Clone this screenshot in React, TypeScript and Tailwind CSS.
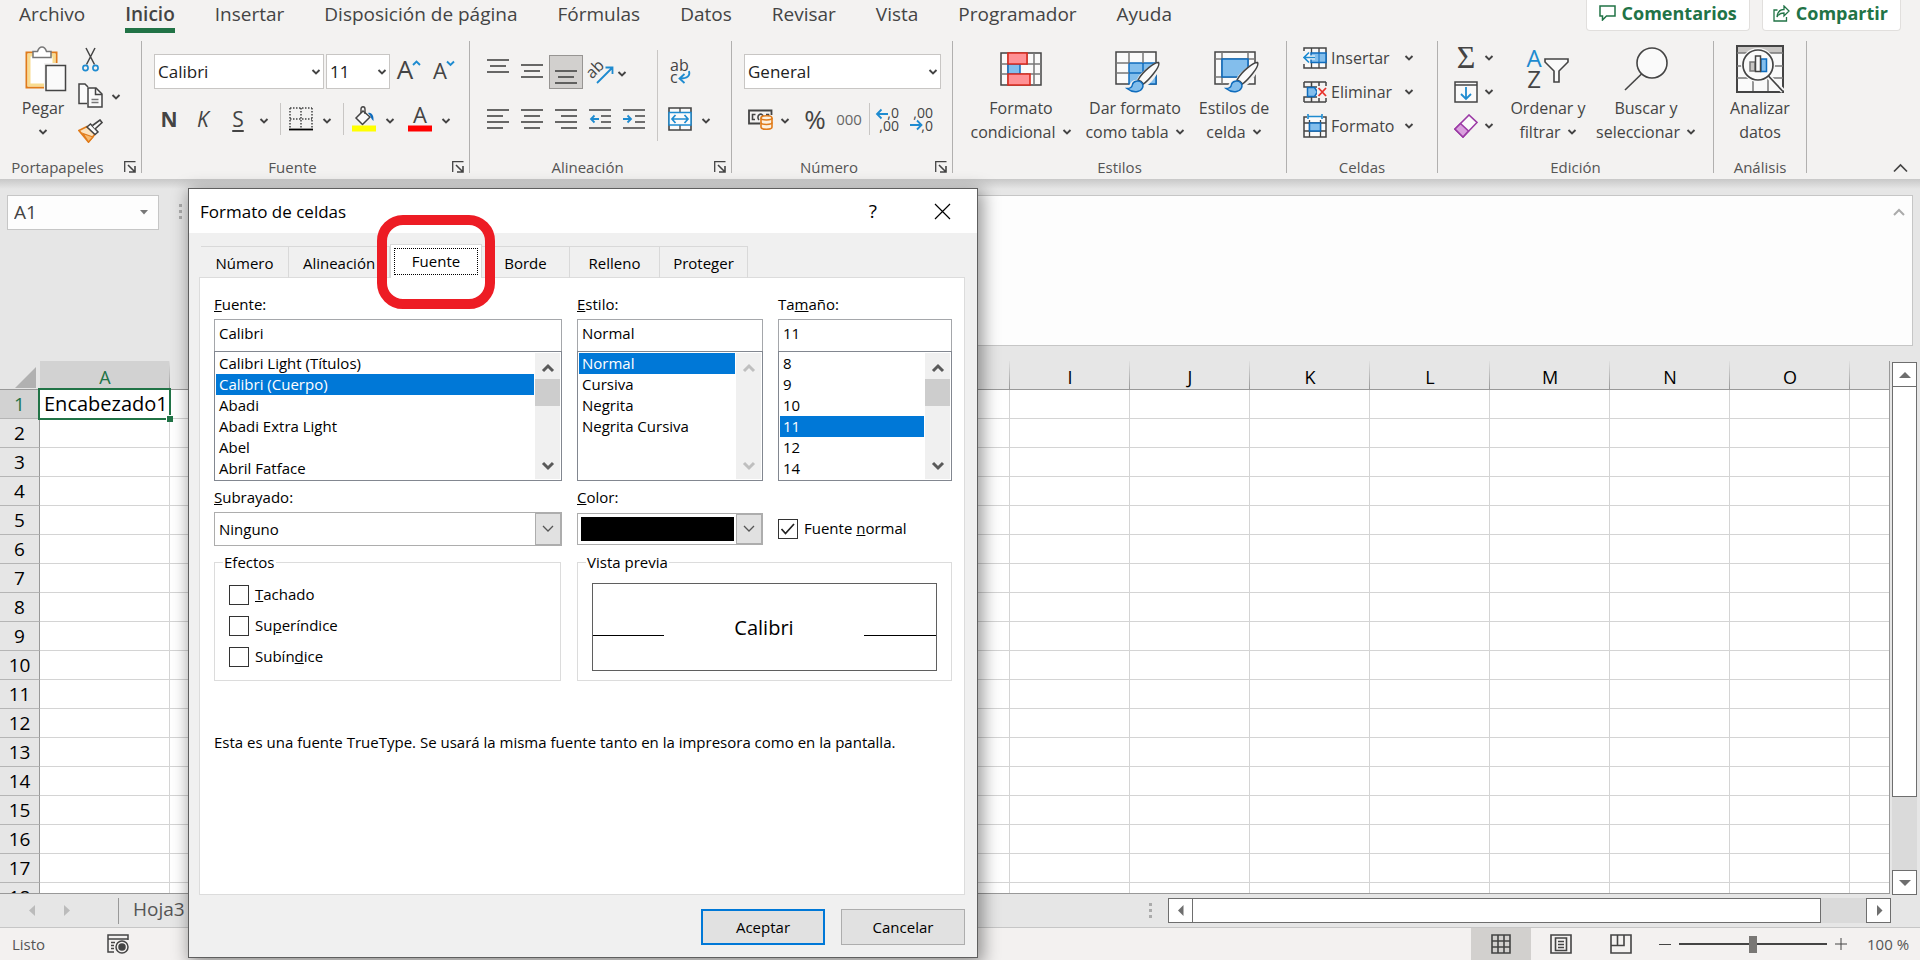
import { ReactNode, useState } from "react";
import clsx from "clsx";

const COLUMNS = ["A", "B", "C", "D", "E", "F", "G", "H", "I", "J", "K", "L", "M", "N", "O", "P"];
const ROWS = Array.from({ length: 18 }, (_, i) => i + 1);
const MENU = [
  "Archivo",
  "Inicio",
  "Insertar",
  "Disposición de página",
  "Fórmulas",
  "Datos",
  "Revisar",
  "Vista",
  "Programador",
  "Ayuda",
];

/* ---------- small shared pieces ---------- */

function Chevron({ className }: { className?: string }) {
  return (
    <svg width="10" height="8" viewBox="0 0 10 8" fill="none" className={clsx("shrink-0", className)}>
      <path d="M1.5 2 5 5.5 8.500 2" stroke="#444" strokeWidth="1.900" />
    </svg>
  );
}

function ChevronButton({ label }: { label: string }) {
  return (
    <button aria-label={label} className="flex h-8 w-4 items-center justify-center pt-1">
      <Chevron />
    </button>
  );
}

function Separator({ className }: { className?: string }) {
  return <div className={clsx("w-px shrink-0 bg-[#c8c6c4]", className ?? "h-8")} />;
}

function Group({
  title,
  launcher,
  width,
  children,
}: {
  title: string;
  launcher?: boolean;
  width: string;
  children: ReactNode;
}) {
  return (
    <section
      aria-label={title}
      className={clsx("flex h-[132px] shrink-0 flex-col border-r border-[#b1b0af]", width)}
    >
      <div className="flex flex-1">{children}</div>
      <div className="flex h-3 items-center text-[15px] leading-3 text-[#555]">
        <span className="flex-1 text-center whitespace-nowrap">{title}</span>
        {launcher && (
          <button aria-label={`Configuración de ${title}`} className="mr-[5px] ml-[9px]">
            <svg width="12" height="12" viewBox="0 0 12 12" fill="none" stroke="#444" strokeWidth="1.300">
              <path d="M.7 11V.7H11.500" />
              <path d="M4 4l6.500 6.500M11 5v6H5" strokeWidth="1.600" />
            </svg>
          </button>
        )}
      </div>
    </section>
  );
}

function BigButton({
  icon,
  lines,
  chevron,
  width,
}: {
  icon: ReactNode;
  lines: [string, string?];
  chevron?: boolean;
  width: string;
}) {
  return (
    <button className={clsx("flex flex-col items-center text-[16px] leading-6 whitespace-nowrap text-[#444]", width)}>
      <span className="flex h-[55px] items-center justify-center">{icon}</span>
      <span>{lines[0]}</span>
      <span className="flex h-6 items-center gap-1.5">
        {lines[1]}
        {chevron && <Chevron />}
      </span>
    </button>
  );
}

/* ---------- ribbon icons ---------- */

const PasteIcon = () => (
  <svg width="42" height="46" viewBox="0 0 42 46" fill="none" className="ml-1.5">
    <path d="M1.500 6.500h30v35h-30z" fill="#fff" stroke="#e07b1a" strokeWidth="2" />
    <path d="M4 9h25v30H4z" stroke="#f9dc8f" strokeWidth="3" />
    <path d="M8 11.500V5.500h4.500C13.500 2.500 14.500 1 17 1s3.500 1.500 4.500 4.500H26v6z" fill="#fff" stroke="#777" strokeWidth="1.500" />
    <path d="M19 17h23v28H19z" fill="#f3f2f1" />
    <path d="M21 19.500h19.500v25H21z" fill="#fafafa" stroke="#444" strokeWidth="1.500" />
  </svg>
);

const CutIcon = () => (
  <svg width="17" height="25" viewBox="0 0 17 25" fill="none">
    <path d="M4 1l8.500 16.500M13 1L4.500 17.500" stroke="#444" strokeWidth="1.500" />
    <circle cx="3.500" cy="21" r="2.600" stroke="#1e8bd0" strokeWidth="1.600" />
    <circle cx="13.500" cy="21" r="2.600" stroke="#1e8bd0" strokeWidth="1.600" />
  </svg>
);

const CopyIcon = () => (
  <svg width="25" height="25" viewBox="0 0 25 25" fill="none" stroke="#444" strokeWidth="1.500">
    <path d="M9 20.500H1V1h6l3 3" fill="#fafafa" />
    <path d="M10 5h8l6 6v13H10z" fill="#fafafa" />
    <path d="M17.500 5v6.500H24" />
    <path d="M13.500 16.500h7M13.500 19.500h7" stroke="#777" />
  </svg>
);

const PainterIcon = () => (
  <svg width="25" height="24" viewBox="0 0 25 24" fill="none">
    <path d="M1 11.500l8-4 8 7.500-6.500 8z" fill="#fbe3c0" stroke="#e07b1a" strokeWidth="1.800" />
    <path d="M5 14.500l10 3.500-4.500 5z" fill="#f7b96d" stroke="#e07b1a" strokeWidth="1.200" />
    <path d="M9 8l3.500-3 7.500 8-3 2.500z" fill="#fafafa" stroke="#444" strokeWidth="1.500" />
    <path d="M14.500 6.500L22 1l2 2.500-7 6.500" fill="#fafafa" stroke="#444" strokeWidth="1.600" />
  </svg>
);

const BordersIcon = () => (
  <svg width="24" height="24" viewBox="0 0 24 24" fill="none">
    <path d="M1 1h22M1 12h22M1 1v20M12 1v20M23 1v20" stroke="#444" strokeWidth="1.500" strokeDasharray="1.500 1.500" />
    <path d="M0 22.500h24" stroke="#000" strokeWidth="1.800" />
  </svg>
);

const FillColorIcon = () => (
  <svg width="24" height="26" viewBox="0 0 24 26" fill="none">
    <path d="M4 12l7-7 7 6-7.500 7.500z" fill="#fafafa" stroke="#444" strokeWidth="1.500" />
    <path d="M9 7V3c0-3 4-3 4 0v5" stroke="#444" strokeWidth="1.400" />
    <path d="M16 7c4-1 6 3 5.500 8-1.500-1-2.500-3-3-5z" fill="#0f6cbd" />
    <path d="M0 19.500h24v6H0z" fill="#ff0" />
  </svg>
);

const FontColorIcon = () => (
  <svg width="24" height="26" viewBox="0 0 24 26" className="overflow-visible">
    <text x="12" y="17" textAnchor="middle" fontSize="22" fill="#444">A</text>
    <path d="M0 19.500h24v6H0z" fill="red" />
  </svg>
);

function LinesIcon({ rows }: { rows: [number, number, number][] }) {
  return (
    <svg width="22" height="26" viewBox="0 0 22 26" stroke="#444" strokeWidth="1.600">
      {rows.map(([y, from, to]) => (
        <path key={y} d={`M${from} ${y}H${to}`} />
      ))}
    </svg>
  );
}

function IndentIcon({ out }: { out?: boolean }) {
  return (
    <svg width="22" height="26" viewBox="0 0 22 26" fill="none">
      <path d="M0 4h22M12 10h10M12 16h10M0 22h22" stroke="#444" strokeWidth="1.600" />
      <path
        d={out ? "M10 13H2M5.500 9.500L2 13l3.500 3.500" : "M0 13h8M4.500 9.500L8 13l-3.500 3.500"}
        stroke="#1e8bd0"
        strokeWidth="1.800"
      />
    </svg>
  );
}

const OrientationIcon = () => (
  <svg width="25" height="26" viewBox="0 0 25 26" fill="none" className="overflow-visible">
    <text x="1" y="18" fontSize="16" fill="#444" transform="rotate(-45 5 17)">ab</text>
    <path d="M8 24L23 9M16.500 8.500H23.500V15" stroke="#1e8bd0" strokeWidth="1.800" />
  </svg>
);

const WrapIcon = () => (
  <svg width="24" height="28" viewBox="0 0 24 28" fill="none" className="overflow-visible">
    <text x="2" y="13" fontSize="16" fill="#444">ab</text>
    <text x="2" y="25" fontSize="16" fill="#444">c</text>
    <path d="M21 13c1.500 5-2 7.500-8.500 7.500M16.500 16l-5 4.500 5 4.500" stroke="#1e8bd0" strokeWidth="1.800" />
  </svg>
);

const MergeIcon = () => (
  <svg width="24" height="24" viewBox="0 0 24 24" fill="none">
    <path d="M1 1h22v22H1z" fill="#fafafa" stroke="#444" strokeWidth="1.600" />
    <path d="M12 1v5M12 18v5" stroke="#444" strokeWidth="1.300" />
    <path d="M1 5.500h22v12.500H1z" fill="#fafafa" stroke="#1e8bd0" strokeWidth="1.500" />
    <path d="M4 12h16M7.500 8L4 12l3.500 4M16.500 8l3.500 4-3.500 4" stroke="#1e8bd0" strokeWidth="1.700" />
  </svg>
);

const CurrencyIcon = () => (
  <svg width="25" height="22" viewBox="0 0 25 22" fill="none">
    <path d="M12 15.500H1V2.500h22.500V7" stroke="#444" strokeWidth="1.800" />
    <path d="M7.500 6.500H4.500v5h2.500M11 12c-1.500-1.500-1.500-4.500.5-5.500s3.500.5 3.500 2M20.500 8V6.500H18" stroke="#444" strokeWidth="1.600" />
    <path d="M13 10c0-3 11-3 11 0v9c0 3-11 3-11 0z" fill="#fdf1e0" stroke="#e07b1a" strokeWidth="1.600" />
    <path d="M13 10c0 2.500 11 2.500 11 0M13 14.500c0 2.500 11 2.500 11 0" stroke="#e07b1a" strokeWidth="1.500" />
  </svg>
);

function DecimalsIcon({ more }: { more?: boolean }) {
  return (
    <svg width="24" height="28" viewBox="0 0 24 28" fill="none" className="overflow-visible">
      <text x="23" y="13" textAnchor="end" fontSize="14" fill="#444">{more ? ",0" : ",00"}</text>
      <text x="23" y="26" textAnchor="end" fontSize="14" fill="#444">{more ? ",00" : ",0"}</text>
      <path
        d={more ? "M12 9H1M5.500 4.500L1 9l4.500 4.500" : "M0 20h11M7 15.500l4.500 4.500L7 24.500"}
        stroke="#1e8bd0"
        strokeWidth="1.800"
      />
    </svg>
  );
}

const ConditionalIcon = () => (
  <svg width="42" height="34" viewBox="0 0 42 34" fill="none">
    <path d="M1 1h40v32H1z" fill="#fafafa" stroke="#444" strokeWidth="1.500" />
    <path d="M8 1v32M27 1v32M34 1v32M1 12h40M1 22h40" stroke="#777" strokeWidth="1.500" />
    <path d="M8 12h12v10H8z" fill="#83beec" stroke="#0f6cbd" strokeWidth="1.500" />
    <path d="M21 13h12v8H21z" fill="#fafafa" />
    <path d="M8 1h19v11H8zM8 22h22v11H8z" fill="#ff9195" stroke="#dc2b1f" strokeWidth="1.600" />
  </svg>
);

const Brush = () => (
  <>
    <path d="M44 12c-4-1-22 13-21 18-5-1-8 3-8 6 0 2-3 3-6 3 7 5 18 4 20-4 6-2 16-15 15-23z" fill="#f3f2f1" stroke="#f3f2f1" strokeWidth="2" />
    <path d="M23 29C28 20 40 11 43.500 11.500 46 15 34 29 28.500 33c-2-3-3-3.500-5.500-4z" fill="#fafafa" stroke="#444" strokeWidth="1.500" />
    <path d="M12 37.500c3 0 5-1 5.500-4 .5-3 6-5 9-2 3 3 1 8-4 9-4 .8-8-1-10.500-3z" fill="#83beec" stroke="#0f6cbd" strokeWidth="1.500" />
  </>
);

const TableFormatIcon = () => (
  <svg width="46" height="42" viewBox="0 0 46 42" fill="none" className="ml-1.5 mt-1.5">
    <path d="M1 1h40v32H1z" fill="#fafafa" stroke="#444" strokeWidth="1.500" />
    <path d="M14 12h27v21H14z" fill="#83beec" stroke="#0f6cbd" strokeWidth="1.500" />
    <path d="M14 1v11M28 1v11M1 12h13M1 22h13" stroke="#777" strokeWidth="1.500" />
    <path d="M28 12v21M14 22h27" stroke="#0f6cbd" strokeWidth="1.500" />
    <Brush />
  </svg>
);

const CellStylesIcon = () => (
  <svg width="46" height="42" viewBox="0 0 46 42" fill="none" className="ml-1.5 mt-1.5">
    <path d="M1 1h40v32H1z" fill="#fafafa" stroke="#444" strokeWidth="1.500" />
    <path d="M8 1v32M34 1v32M1 8h40M1 26h40" stroke="#777" strokeWidth="1.500" />
    <path d="M8 8h26v18H8z" fill="#83beec" stroke="#0f6cbd" strokeWidth="1.600" />
    <Brush />
  </svg>
);

const InsertCellsIcon = () => (
  <svg width="24" height="22" viewBox="0 0 24 22" fill="none">
    <path d="M1 1h22v20H1z" fill="#fafafa" stroke="#444" strokeWidth="1.500" />
    <path d="M8.500 1v20M16 1v20" stroke="#444" strokeWidth="1.300" />
    <path d="M8 6h15v9.500H8z" fill="#83beec" stroke="#0f6cbd" strokeWidth="1.500" />
    <path d="M16 6v9" stroke="#0f6cbd" />
    <path d="M0 4h7v13H0z" fill="#f3f2f1" />
    <path d="M12 10.500H1M6 5.500l-5 5 5 5" stroke="#fafafa" strokeWidth="4" />
    <path d="M12 10.500H1M6 5.500l-5 5 5 5" stroke="#1e8bd0" strokeWidth="1.700" />
  </svg>
);

const DeleteCellsIcon = () => (
  <svg width="24" height="22" viewBox="0 0 24 22" fill="none">
    <path d="M1 1h22M1 21h22M1 1v5h22M1 21v-5h22M8.500 1v5M16 1v5M8.500 16v5M16 16v5M23 1v5M23 16v5" stroke="#444" strokeWidth="1.500" />
    <path d="M4.500 6.500h7l3 4.500-3 4.500h-7z" fill="#83beec" stroke="#0f6cbd" strokeWidth="1.500" />
    <path d="M14 5h10v12H14z" fill="#f3f2f1" />
    <path d="M15.500 7l7.500 8M23 7l-7.500 8" stroke="#e8312a" strokeWidth="1.800" />
  </svg>
);

const FormatCellsIcon = () => (
  <svg width="24" height="24" viewBox="0 0 24 24" fill="none">
    <path d="M4 3H1v20h22V3h-3" fill="#fafafa" stroke="#444" strokeWidth="1.500" />
    <path d="M6.500 6v17M17.500 6v17M1 9h22M1 17h22" stroke="#444" strokeWidth="1.300" />
    <path d="M6.500 9h11v8h-11z" fill="#83beec" stroke="#0f6cbd" strokeWidth="1.500" />
    <path d="M5 2.500h14M5 0v5M19 0v5" stroke="#1e8bd0" strokeWidth="1.600" />
  </svg>
);

const SumIcon = () => (
  <svg width="24" height="26" viewBox="0 0 24 26" className="overflow-visible">
    <text x="12" y="23" textAnchor="middle" fontSize="32" fontFamily="Liberation Serif, serif" fill="#444">Σ</text>
  </svg>
);

const FillDownIcon = () => (
  <svg width="24" height="22" viewBox="0 0 24 22" fill="none">
    <path d="M1 1h22v20H1z" fill="#fafafa" stroke="#444" strokeWidth="1.500" />
    <path d="M1 4h22" stroke="#444" strokeWidth="1.500" />
    <path d="M12 6v12M7 13l5 5 5-5" stroke="#1e8bd0" strokeWidth="1.800" />
  </svg>
);

const EraserIcon = () => (
  <svg width="24" height="24" viewBox="0 0 24 24" fill="none" stroke="#9b3aa5" strokeWidth="1.600">
    <path d="M1 15L15 1l8 7.500L9 23z" fill="#fafafa" />
    <path d="M1 15l5.500-5.500 8 7.500L9 23z" fill="#d9a0dd" />
  </svg>
);

const SortFilterIcon = () => (
  <svg width="44" height="42" viewBox="0 0 44 42" fill="none" className="overflow-visible">
    <text x="8" y="19" textAnchor="middle" fontSize="24" fill="#1e8bd0">A</text>
    <text x="8" y="40" textAnchor="middle" fontSize="24" fill="#444">Z</text>
    <path d="M19 11h23v3l-9 9v11h-5V23l-9-9z" fill="#fafafa" stroke="#444" strokeWidth="1.600" />
  </svg>
);

const FindIcon = () => (
  <svg width="44" height="44" viewBox="0 0 44 44" fill="none" stroke="#444" strokeWidth="1.600">
    <circle cx="28" cy="16" r="15" fill="#fafafa" />
    <path d="M17.500 27L1 43" />
  </svg>
);

const AnalyzeIcon = () => (
  <svg width="48" height="48" viewBox="0 0 48 48" fill="none">
    <path d="M1 1h46v46H1z" fill="#fafafa" stroke="#444" strokeWidth="2" />
    <path d="M2 2h44v6H2z" fill="#c8c6c4" />
    <path d="M1 8h46M1 21h46M1 33h46M17 8v38M32 8v38" stroke="#777" strokeWidth="1.500" />
    <circle cx="22" cy="20" r="17" fill="#fafafa" />
    <path d="M33 32l14 14" stroke="#fafafa" strokeWidth="5" />
    <circle cx="22" cy="20" r="15" fill="#fafafa" stroke="#444" strokeWidth="1.700" />
    <path d="M32.500 31L47 46.500" stroke="#444" strokeWidth="1.700" />
    <path d="M14 17h5v9h-5z" fill="#c8c6c4" stroke="#777" strokeWidth="1.500" />
    <path d="M25 14h5.500v12.500H25z" fill="#83beec" stroke="#0f6cbd" strokeWidth="1.500" />
    <path d="M19.500 11h5v15.500h-5z" fill="#fafafa" stroke="#444" strokeWidth="1.500" />
  </svg>
);

/* ---------- ribbon ---------- */

function RibbonSelect({ label, value, width }: { label: string; value: string; width: string }) {
  return (
    <div className={clsx("relative h-[35px] shrink-0", width)}>
      <select
        aria-label={label}
        className="h-full w-full appearance-none border border-[#c8c6c4] bg-white pl-[3px] text-[17px] text-[#222]"
      >
        <option>{value}</option>
      </select>
      <Chevron className="pointer-events-none absolute top-[14px] right-[3px]" />
    </div>
  );
}

function IconButton({ label, children, active }: { label: string; children: ReactNode; active?: boolean }) {
  return (
    <button
      aria-label={label}
      className={clsx("flex h-[34px] w-[34px] shrink-0 items-center justify-center", {
        "border border-[#979593] bg-[#d2d0ce]": active,
      })}
    >
      {children}
    </button>
  );
}

function Ribbon() {
  return (
    <header className="relative z-10 h-[179px] shrink-0 bg-[#f3f2f1] text-[#444]">
      <nav className="flex h-[41px] pl-[19px]">
        {MENU.map((item) => (
          <button
            key={item}
            className={clsx("mr-10 flex h-[33px] items-start text-[19px] leading-7 whitespace-nowrap", {
              "border-b-[5px] border-[#217346] font-semibold": item === "Inicio",
            })}
          >
            {item}
          </button>
        ))}
        <div className="mr-[19px] ml-auto flex gap-3 text-[18px] font-bold text-[#217346]">
          <button className="flex h-[31px] items-center gap-1.5 rounded-b border border-t-0 border-[#e1dfdd] bg-white px-3 pb-1">
            <svg width="17" height="16" viewBox="0 0 17 16" fill="none" stroke="#217346" strokeWidth="1.500">
              <path d="M1 1h15v10H7.500L3.500 15v-4H1z" />
            </svg>
            Comentarios
          </button>
          <button className="flex h-[31px] items-center gap-1.5 rounded-b border border-t-0 border-[#e1dfdd] bg-white pr-3 pb-1 pl-2.5">
            <svg width="17" height="17" viewBox="0 0 17 17" fill="none" stroke="#217346" strokeWidth="1.300">
              <path d="M4.500 5H1v11h12.500v-4" />
              <path d="M4 12c.5-5 3-7.500 7-7.500V1l5 5-5 5V8C7.500 8 5.500 9 4 12z" />
            </svg>
            Compartir
          </button>
        </div>
      </nav>

      <div className="flex">
        <Group title="Portapapeles" launcher width="w-[142px]">
          <BigButton icon={<PasteIcon />} lines={["Pegar"]} chevron width="ml-[10px] w-[66px]" />
          <div className="flex flex-col">
            {[
              { label: "Cortar", icon: <CutIcon /> },
              { label: "Copiar", icon: <CopyIcon />, menu: true },
              { label: "Copiar formato", icon: <PainterIcon /> },
            ].map(({ label, icon, menu }) => (
              <div key={label} className="flex h-9 items-center gap-1">
                <button aria-label={label} className="flex w-7 justify-center">
                  {icon}
                </button>
                {menu && <ChevronButton label="Opciones de copiado" />}
              </div>
            ))}
          </div>
        </Group>

        <Group title="Fuente" launcher width="w-[328px]">
          <div className="flex flex-col pt-[13px]">
            <div className="flex h-[35px] items-center pl-3">
              <RibbonSelect label="Fuente" value="Calibri" width="w-[170px] mr-0.5" />
              <RibbonSelect label="Tamaño de fuente" value="11" width="w-16" />
              <button aria-label="Aumentar tamaño" className="ml-1.5">
                <svg width="26" height="28" viewBox="0 0 26 28" fill="none" className="overflow-visible">
                  <text x="9" y="21" textAnchor="middle" fontSize="26" fill="#444">A</text>
                  <path d="M17 7l3.500-3.500L24 7" stroke="#1e8bd0" strokeWidth="1.900" />
                </svg>
              </button>
              <button aria-label="Reducir tamaño" className="ml-2.5">
                <svg width="24" height="28" viewBox="0 0 24 28" fill="none" className="overflow-visible">
                  <text x="8" y="21" textAnchor="middle" fontSize="22" fill="#444">A</text>
                  <path d="M15 3.500L18.500 7 22 3.500" stroke="#1e8bd0" strokeWidth="1.900" />
                </svg>
              </button>
            </div>
            <div className="mt-3.5 flex h-8 items-center gap-2 pl-2.5">
              <div className="flex items-center text-[21px] leading-7">
                <button className="w-[34px] font-bold">N</button>
                <button className="w-[34px] italic">K</button>
                <button className="w-9 underline underline-offset-3">S</button>
                <ChevronButton label="Tipos de subrayado" />
              </div>
              <Separator />
              <div className="flex items-center gap-1.5">
                <button aria-label="Bordes"><BordersIcon /></button>
                <ChevronButton label="Más bordes" />
              </div>
              <Separator />
              <div className="flex items-center gap-1.5">
                <button aria-label="Color de relleno"><FillColorIcon /></button>
                <ChevronButton label="Más colores de relleno" />
              </div>
              <div className="ml-0.5 flex items-center gap-1.5">
                <button aria-label="Color de fuente"><FontColorIcon /></button>
                <ChevronButton label="Más colores de fuente" />
              </div>
            </div>
          </div>
        </Group>

        <Group title="Alineación" launcher width="w-[262px]">
          <div className="w-[187px] pt-[13px] pl-[11px]">
            <div className="flex h-[35px] items-center">
              <IconButton label="Alinear arriba">
                <LinesIcon rows={[[1, 0, 22], [7, 3, 19], [13, 0, 22]]} />
              </IconButton>
              <IconButton label="Alinear en el medio">
                <LinesIcon rows={[[6, 0, 22], [12, 3, 19], [18, 0, 22]]} />
              </IconButton>
              <IconButton label="Alinear abajo" active>
                <LinesIcon rows={[[12, 0, 22], [18, 3, 19], [24, 0, 22]]} />
              </IconButton>
              <button aria-label="Orientación" className="ml-1.5"><OrientationIcon /></button>
              <ChevronButton label="Más orientaciones" />
            </div>
            <div className="mt-3.5 flex h-8 items-center">
              <IconButton label="Alinear a la izquierda">
                <LinesIcon rows={[[4, 0, 22], [10, 0, 16], [16, 0, 22], [22, 0, 16]]} />
              </IconButton>
              <IconButton label="Centrar">
                <LinesIcon rows={[[4, 0, 22], [10, 3, 19], [16, 0, 22], [22, 3, 19]]} />
              </IconButton>
              <IconButton label="Alinear a la derecha">
                <LinesIcon rows={[[4, 0, 22], [10, 6, 22], [16, 0, 22], [22, 6, 22]]} />
              </IconButton>
              <IconButton label="Disminuir sangría"><IndentIcon out /></IconButton>
              <IconButton label="Aumentar sangría"><IndentIcon /></IconButton>
            </div>
          </div>
          <Separator className="mt-[9px] h-[91px]" />
          <div className="pt-[13px] pl-2.5">
            <div className="flex h-[35px] items-center">
              <button aria-label="Ajustar texto"><WrapIcon /></button>
            </div>
            <div className="mt-3.5 flex h-8 items-center gap-1.5">
              <button aria-label="Combinar y centrar"><MergeIcon /></button>
              <ChevronButton label="Más opciones de combinación" />
            </div>
          </div>
        </Group>

        <Group title="Número" launcher width="w-[221px]">
          <div className="pt-[13px] pl-3">
            <RibbonSelect label="Formato de número" value="General" width="w-[197px]" />
            <div className="mt-3.5 flex h-8 items-center pl-1">
              <button aria-label="Formato de contabilidad"><CurrencyIcon /></button>
              <div className="ml-1">
                <ChevronButton label="Más monedas" />
              </div>
              <button className="ml-2.5 w-6 text-[26px] leading-7">%</button>
              <button className="ml-2 w-[28px] text-[15px] leading-7 text-[#666]">000</button>
              <Separator className="mx-1.5 h-8" />
              <button aria-label="Aumentar decimales"><DecimalsIcon more /></button>
              <button aria-label="Disminuir decimales" className="ml-2.5"><DecimalsIcon /></button>
            </div>
          </div>
        </Group>

        <Group title="Estilos" width="w-[334px]">
          <BigButton icon={<ConditionalIcon />} lines={["Formato", "condicional"]} chevron width="ml-[11px] w-[114px]" />
          <BigButton icon={<TableFormatIcon />} lines={["Dar formato", "como tabla"]} chevron width="w-[114px]" />
          <BigButton icon={<CellStylesIcon />} lines={["Estilos de", "celda"]} chevron width="w-[84px]" />
        </Group>

        <Group title="Celdas" width="w-[151px]">
          <div className="pl-4">
            {[
              { label: "Insertar", icon: <InsertCellsIcon /> },
              { label: "Eliminar", icon: <DeleteCellsIcon /> },
              { label: "Formato", icon: <FormatCellsIcon /> },
            ].map(({ label, icon }) => (
              <button key={label} className="flex h-[34px] w-[111px] items-center gap-1 text-[16px]">
                {icon}
                {label}
                <Chevron className="ml-auto" />
              </button>
            ))}
          </div>
        </Group>

        <Group title="Edición" width="w-[276px]">
          <div className="pl-4">
            {[
              { label: "Autosuma", icon: <SumIcon /> },
              { label: "Rellenar", icon: <FillDownIcon /> },
              { label: "Borrar", icon: <EraserIcon /> },
            ].map(({ label, icon }) => (
              <button key={label} aria-label={label} className="flex h-[34px] items-center gap-1.5">
                {icon}
                <Chevron />
              </button>
            ))}
          </div>
          <BigButton icon={<SortFilterIcon />} lines={["Ordenar y", "filtrar"]} chevron width="ml-3 w-[84px]" />
          <BigButton icon={<FindIcon />} lines={["Buscar y", "seleccionar"]} chevron width="ml-1 w-[104px]" />
        </Group>

        <Group title="Análisis" width="w-[93px]">
          <BigButton icon={<AnalyzeIcon />} lines={["Analizar", "datos"]} width="w-full" />
        </Group>

        <button aria-label="Contraer la cinta" className="mt-auto mr-3 ml-auto">
          <svg width="15" height="10" viewBox="0 0 15 10" fill="none">
            <path d="M1 8.500L7.500 2 14 8.500" stroke="#444" strokeWidth="1.700" />
          </svg>
        </button>
      </div>
    </header>
  );
}

/* ---------- formula bar and sheet ---------- */

const Dots = () => (
  <div className="flex flex-col gap-[3px]">
    <i className="size-[3px] bg-[#ababab]" />
    <i className="size-[3px] bg-[#ababab]" />
    <i className="size-[3px] bg-[#ababab]" />
  </div>
);

function FormulaBar() {
  return (
    <div className="shrink-0 pb-[15px]">
      <div className="mb-1.5 h-2.5 bg-linear-to-b from-[#c8c8c8] to-[#e6e6e6]" />
      <div className="flex items-start pr-[7px] pl-[7px]">
        <div className="flex h-[35px] w-[152px] items-center border border-[#c6c6c6] bg-[#fdfdfd] pr-2.5 pl-1.5">
          <input aria-label="Cuadro de nombres" defaultValue="A1" className="w-full text-[19px] text-[#444] outline-none" />
          <svg width="8" height="5" viewBox="0 0 8 5" className="shrink-0">
            <path d="M0 0h8L4 4.500z" fill="#777" />
          </svg>
        </div>
        <div className="mt-[9px] ml-5">
          <Dots />
        </div>
        <div className="ml-[130px] flex h-[151px] flex-1 items-start border border-[#c6c6c6] bg-[#fdfdfd]">
          <textarea aria-label="Barra de fórmulas" className="h-full flex-1 resize-none outline-none" />
          <svg width="12" height="8" viewBox="0 0 12 8" fill="none" className="mt-3 mr-[7px]">
            <path d="M1 7l5-5 5 5" stroke="#ababab" strokeWidth="2" />
          </svg>
        </div>
      </div>
    </div>
  );
}

function Sheet() {
  return (
    <div className="min-w-0 flex-1 overflow-hidden border-r border-b border-[#999]">
      <table className="w-max table-fixed border-separate border-spacing-0">
        <thead>
          <tr className="h-[29px] text-[18px] leading-6">
            <th className="w-10 border-r border-b border-r-transparent border-b-[#999] p-0">
              <svg width="21" height="21" viewBox="0 0 21 21" className="mt-1 ml-[15px]">
                <path d="M21 0v21H0z" fill="#b1b1b1" />
              </svg>
            </th>
            {COLUMNS.map((column) => (
              <th
                key={column}
                className={clsx(
                  "border-b border-[#999] bg-[linear-gradient(to_bottom,#e0e0e0,#999)] bg-[length:1px_100%] bg-right bg-no-repeat p-0 pt-1 font-normal",
                  column === "A" ? "w-[130px] bg-[#d2d2d2] text-[#217346]" : "w-[120px] text-black"
                )}
              >
                {column}
              </th>
            ))}
          </tr>
        </thead>
        <tbody>
          {ROWS.map((row) => (
            <tr key={row} className="h-[29px] text-[19px] leading-6">
              <th
                className={clsx("border-r border-b border-r-[#999] border-b-[#b5b5b5] p-0 font-normal", {
                  "bg-[#d2d2d2] text-[#217346]": row === 1,
                })}
              >
                {row}
              </th>
              {COLUMNS.map((column) =>
                row === 1 && column === "A" ? (
                  <td
                    key={column}
                    className="relative z-10 border-r border-b border-[#d4d4d4] bg-white p-0 pl-1 text-[20px] whitespace-nowrap"
                  >
                    Encabezado1
                    <div className="absolute -inset-0.5 border-2 border-[#217346]" />
                    <div className="absolute -right-1 -bottom-1 size-[7px] border-t border-l border-white bg-[#217346]" />
                  </td>
                ) : (
                  <td key={column} className="border-r border-b border-[#d4d4d4] bg-white p-0" />
                )
              )}
            </tr>
          ))}
        </tbody>
      </table>
    </div>
  );
}

function ScrollArrow({ label, d }: { label: string; d: string }) {
  return (
    <button aria-label={label} className="flex size-[25px] shrink-0 items-center justify-center border border-[#6e6e6e] bg-white">
      <svg width="12" height="12" viewBox="0 0 12 12">
        <path d={d} fill="#6e6e6e" />
      </svg>
    </button>
  );
}

function SheetTabs() {
  return (
    <div className="flex h-[34px] shrink-0 items-center border-b border-[#c6c6c6] pr-[29px]">
      <button aria-label="Hoja anterior" className="ml-[29px]">
        <svg width="6" height="11" viewBox="0 0 6 11"><path d="M6 0v11L0 5.500z" fill="#bbb" /></svg>
      </button>
      <button aria-label="Hoja siguiente" className="ml-[29px]">
        <svg width="6" height="11" viewBox="0 0 6 11"><path d="M0 0v11l6-5.500z" fill="#bbb" /></svg>
      </button>
      <div className="ml-12 h-[26px] w-px bg-[#999]" />
      <button className="ml-3.5 pb-1 text-[19px] leading-6 text-[#555]">Hoja3</button>
      <div className="mr-4 ml-auto">
        <Dots />
      </div>
      <div className="flex w-[723px] bg-[#dadada]">
        <ScrollArrow label="Desplazar a la izquierda" d="M8.500 0v11L3 5.500z" />
        <div className="-ml-px h-[25px] w-[629px] border border-[#6e6e6e] bg-white" />
        <div className="ml-auto">
          <ScrollArrow label="Desplazar a la derecha" d="M4 0v11l5.500-5.500z" />
        </div>
      </div>
    </div>
  );
}

function StatusBar() {
  return (
    <footer className="flex h-8 shrink-0 items-center bg-[#f3f1f0] pl-3 text-[15px] text-[#555]">
      Listo
      <svg width="22" height="20" viewBox="0 0 22 20" fill="none" stroke="#444" strokeWidth="1.500" className="ml-[62px]">
        <path d="M7 18H1V1h20v5M1 5h20M4 8.500h4M4 11.500h3M4 14.500h3" />
        <circle cx="15" cy="13" r="6" />
        <circle cx="15" cy="13" r="3" fill="#444" />
      </svg>
      <div className="ml-auto flex h-full">
        <button aria-label="Normal" className="flex w-[60px] items-center justify-center bg-[#d2d0ce]">
          <svg width="20" height="20" viewBox="0 0 20 20" fill="none" stroke="#444" strokeWidth="1.600">
            <path d="M1 1h18v18H1zM7 1v18M13 1v18M1 7h18M1 13h18" />
          </svg>
        </button>
        <button aria-label="Diseño de página" className="flex w-[60px] items-center justify-center">
          <svg width="22" height="20" viewBox="0 0 22 20" fill="none" stroke="#444" strokeWidth="1.600">
            <path d="M1 1h20v18H1zM5.500 4h11v12.500h-11zM8 7.500h6M8 10.500h6M8 13.500h6" />
          </svg>
        </button>
        <button aria-label="Vista previa de salto de página" className="flex w-[60px] items-center justify-center">
          <svg width="22" height="20" viewBox="0 0 22 20" fill="none" stroke="#444" strokeWidth="1.600">
            <path d="M1 1h20v18H1zM1 11.500h13V1M7.500 1v10" />
          </svg>
        </button>
      </div>
      <button aria-label="Alejar" className="ml-2 flex h-3 w-3 items-center">
        <i className="h-px w-full bg-[#444]" />
      </button>
      <input
        type="range"
        aria-label="Zoom"
        className="mx-2 h-[17px] w-[148px] appearance-none bg-transparent [&::-webkit-slider-runnable-track]:h-[17px] [&::-webkit-slider-runnable-track]:bg-[linear-gradient(#444,#444)] [&::-webkit-slider-runnable-track]:bg-[length:100%_2px] [&::-webkit-slider-runnable-track]:bg-center [&::-webkit-slider-runnable-track]:bg-no-repeat [&::-webkit-slider-thumb]:h-[17px] [&::-webkit-slider-thumb]:w-2 [&::-webkit-slider-thumb]:appearance-none [&::-webkit-slider-thumb]:bg-[#797775]"
      />
      <button aria-label="Acercar">
        <svg width="12" height="12" viewBox="0 0 12 12"><path d="M0 6h12M6 0v12" stroke="#444" /></svg>
      </button>
      <span className="w-[73px] pl-5 whitespace-nowrap">100 %</span>
    </footer>
  );
}

/* ---------- format dialog ---------- */

const DIALOG_TABS = [
  { name: "Número", width: "w-[88px]" },
  { name: "Alineación", width: "w-[101px]" },
  { name: "Fuente", width: "w-[92px]" },
  { name: "Borde", width: "w-[88px]" },
  { name: "Relleno", width: "w-[90px]" },
  { name: "Proteger", width: "w-[88px]" },
];

function ListField({
  label,
  name,
  value,
  items,
  selected,
  thumb,
  width,
}: {
  label: ReactNode;
  name: string;
  value: string;
  items: string[];
  selected: string;
  thumb?: boolean;
  width: string;
}) {
  const arrow = thumb ? "#5a5a5a" : "#bfbfbf";
  return (
    <div className={width}>
      <label htmlFor={name} className="block h-[25px]">
        {label}
      </label>
      <input
        id={name}
        defaultValue={value}
        className="block h-8 w-full border border-b-0 border-[#a5a7ab] bg-white pb-1.5 pl-1 outline-none"
      />
      <div className="flex h-[130px] border border-[#828790] bg-white p-px">
        <ul role="listbox" aria-label={name} className="flex-1 overflow-hidden">
          {items.map((item) => (
            <li
              key={item}
              role="option"
              aria-selected={item === selected}
              className={clsx("h-[21px] pl-[3px] whitespace-nowrap", {
                "bg-[#0078d7] text-white": item === selected,
              })}
            >
              {item}
            </li>
          ))}
        </ul>
        <div className="ml-px flex w-[25px] flex-col items-center bg-[#f0f0f0]">
          <svg width="14" height="26" viewBox="0 0 14 26" fill="none">
            <path d="M2 18l5-5 5 5" stroke={arrow} strokeWidth="3" />
          </svg>
          {thumb && <div className="h-[27px] w-full bg-[#cdcdcd]" />}
          <svg width="14" height="26" viewBox="0 0 14 26" fill="none" className="mt-auto">
            <path d="M2 10l5 5 5-5" stroke={arrow} strokeWidth="3" />
          </svg>
        </div>
      </div>
    </div>
  );
}

const DropButton = () => (
  <span className="pointer-events-none absolute inset-y-px right-px flex w-[26px] items-center justify-center border border-[#adadad] bg-[#e1e1e1]">
    <svg width="12" height="8" viewBox="0 0 12 8" fill="none">
      <path d="M1 1l5 5 5-5" stroke="#555" strokeWidth="1.300" />
    </svg>
  </span>
);

function Check({
  id,
  checked,
  onChange,
  children,
}: {
  id: string;
  checked: boolean;
  onChange: () => void;
  children: ReactNode;
}) {
  return (
    <div className="relative flex h-[31px] items-center gap-1.5">
      <input
        id={id}
        type="checkbox"
        checked={checked}
        onChange={onChange}
        className="size-5 appearance-none border border-[#333] bg-white"
      />
      {checked && (
        <svg width="20" height="20" viewBox="0 0 20 20" fill="none" className="pointer-events-none absolute left-0">
          <path d="M3.500 10l4 4.500L16 5" stroke="#222" strokeWidth="1.700" />
        </svg>
      )}
      <label htmlFor={id}>{children}</label>
    </div>
  );
}

function FormatDialog() {
  const [effects, setEffects] = useState<string[]>([]);
  const [normalFont, setNormalFont] = useState(true);

  const toggle = (effect: string) => {
    setEffects((current) =>
      current.includes(effect) ? current.filter((e) => e !== effect) : [...current, effect]
    );
  };

  return (
    <div
      role="dialog"
      aria-label="Formato de celdas"
      className="absolute top-[188px] left-[188px] z-20 w-[790px] border border-[#5f5f5f] bg-[#f0f0f0] text-[15px] leading-[21px] text-black shadow-[3px_4px_16px_2px_rgba(0,0,0,0.4)]"
    >
      <div className="flex h-11 items-center bg-white pr-[26px] pl-[11px] text-[17px]">
        <h2>Formato de celdas</h2>
        <button aria-label="Ayuda" className="ml-auto text-[19px]">?</button>
        <button aria-label="Cerrar" className="ml-[57px]">
          <svg width="17" height="17" viewBox="0 0 17 17">
            <path d="M1 1l15 15M16 1L1 16" stroke="#000" strokeWidth="1.200" />
          </svg>
        </button>
      </div>

      <div className="pt-[11px] pr-3 pb-3 pl-2.5">
        <div role="tablist" className="-mb-px flex h-[34px] items-end pl-0.5">
          {DIALOG_TABS.map(({ name, width }) =>
            name === "Fuente" ? (
              <button
                key={name}
                role="tab"
                aria-selected
                className={clsx("relative h-[34px] border border-b-0 border-[#d9d9d9] bg-white p-[3px]", width)}
              >
                <span className="flex h-full items-center justify-center border border-dotted border-black">{name}</span>
                {/* marker around the active tab */}
                <span className="pointer-events-none absolute -inset-x-[14px] -top-[30px] -bottom-[31px] rounded-[26px] border-[10px] border-[#ed1c24]" />
              </button>
            ) : (
              <button
                key={name}
                role="tab"
                aria-selected={false}
                className={clsx("h-8 border-t border-r border-[#d9d9d9] pt-0.5", width)}
              >
                {name}
              </button>
            )
          )}
        </div>

        <div className="min-h-[618px] border border-[#dcdcdc] bg-white pt-4 pl-3.5">
          <div className="flex gap-[15px]">
            <ListField
              name="fuente"
              label={<><u>F</u>uente:</>}
              value="Calibri"
              items={["Calibri Light (Títulos)", "Calibri (Cuerpo)", "Abadi", "Abadi Extra Light", "Abel", "Abril Fatface"]}
              selected="Calibri (Cuerpo)"
              thumb
              width="w-[348px]"
            />
            <ListField
              name="estilo"
              label={<><u>E</u>stilo:</>}
              value="Normal"
              items={["Normal", "Cursiva", "Negrita", "Negrita Cursiva"]}
              selected="Normal"
              width="w-[186px]"
            />
            <ListField
              name="tamaño"
              label={<>Ta<u>m</u>año:</>}
              value="11"
              items={["8", "9", "10", "11", "12", "14"]}
              selected="11"
              thumb
              width="w-[174px]"
            />
          </div>

          <div className="mt-1.5 flex gap-[15px]">
            <div className="w-[348px]">
              <label htmlFor="subrayado" className="block h-[25px]"><u>S</u>ubrayado:</label>
              <div className="relative">
                <select id="subrayado" className="h-[34px] w-full appearance-none border border-[#adadad] bg-white pl-1">
                  <option>Ninguno</option>
                </select>
                <DropButton />
              </div>
            </div>
            <div className="w-[186px]">
              <label htmlFor="color" className="block h-[25px]"><u>C</u>olor:</label>
              <div className="relative mt-px">
                <select
                  id="color"
                  className="h-8 w-full appearance-none border border-[#adadad] bg-black pl-3 text-black shadow-[inset_0_0_0_3px_white]"
                >
                  <option>Negro</option>
                </select>
                <span className="pointer-events-none absolute inset-y-px right-px w-7 bg-white" />
                <DropButton />
              </div>
            </div>
            <div className="pt-[26px]">
              <Check id="normal" checked={normalFont} onChange={() => setNormalFont(!normalFont)}>
                Fuente <u>n</u>ormal
              </Check>
            </div>
          </div>

          <div className="mt-1.5 flex gap-4">
            <fieldset className="h-[129px] w-[347px] border border-[#dcdcdc] pl-3.5">
              <legend className="-ml-1.5 px-px">Efectos</legend>
              <div className="pt-1.5">
                <Check id="tachado" checked={effects.includes("tachado")} onChange={() => toggle("tachado")}>
                  <u>T</u>achado
                </Check>
                <Check id="super" checked={effects.includes("super")} onChange={() => toggle("super")}>
                  Su<u>p</u>eríndice
                </Check>
                <Check id="sub" checked={effects.includes("sub")} onChange={() => toggle("sub")}>
                  Subín<u>d</u>ice
                </Check>
              </div>
            </fieldset>
            <fieldset className="h-[129px] w-[375px] border border-[#dcdcdc] pr-3.5 pl-3.5">
              <legend className="-ml-1.5 px-px">Vista previa</legend>
              <div className="mt-2.5 flex h-[88px] items-center justify-between border border-[#5f5f5f] pt-3">
                <i className="mt-1 h-px w-[71px] bg-black" />
                <span className="pb-3 text-[20px]">Calibri</span>
                <i className="mt-1 h-px w-[72px] bg-black" />
              </div>
            </fieldset>
          </div>

          <p className="mt-[51px] whitespace-nowrap">
            Esta es una fuente TrueType. Se usará la misma fuente tanto en la impresora como en la pantalla.
          </p>
        </div>

        <div className="mt-3.5 flex justify-end gap-4">
          <button className="h-9 w-[124px] border-2 border-[#0078d7] bg-[#e1e1e1]">Aceptar</button>
          <button className="h-9 w-[124px] border border-[#adadad] bg-[#e1e1e1]">Cancelar</button>
        </div>
      </div>
    </div>
  );
}

export default function App() {
  return (
    <div className="relative flex h-screen flex-col overflow-hidden bg-[#e6e6e6] font-['Open_Sans','Noto_Sans',sans-serif]">
      <Ribbon />
      <FormulaBar />
      <main className="flex min-h-0 flex-1">
        <Sheet />
        <div className="-mb-px flex w-[30px] shrink-0 flex-col items-start pt-px pl-0.5">
          <ScrollArrow label="Desplazar hacia arriba" d="M0 9h12L6 3z" />
          <div className="-mt-px flex w-[25px] flex-1 flex-col bg-[#dadada]">
            <div className="h-[85%] border border-[#6e6e6e] bg-white" />
          </div>
          <ScrollArrow label="Desplazar hacia abajo" d="M0 3h12L6 9z" />
        </div>
      </main>
      <SheetTabs />
      <StatusBar />
      <FormatDialog />
    </div>
  );
}
